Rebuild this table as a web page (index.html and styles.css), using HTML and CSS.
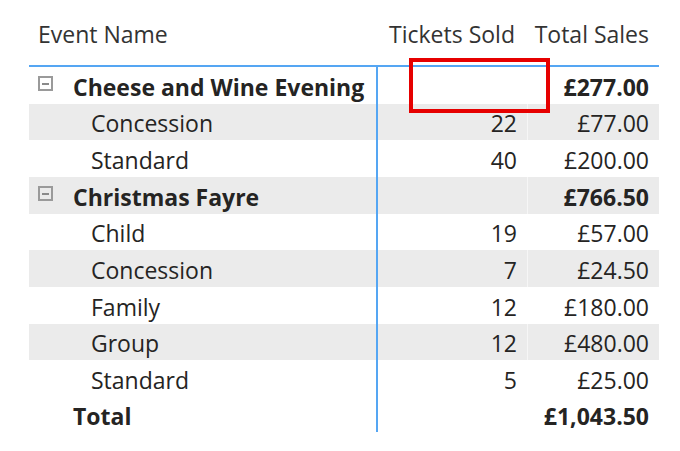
FILE: index.html
```html
<html>

<head>
  <meta name="description" content="Event ticket sales matrix" />
  <link rel="stylesheet" href="styles.css">
</head>

<body>
  <div class="matrix">
    <div class="row head">
      <div class="cell name">Event Name</div>
      <div class="cell num tickets">Tickets Sold</div>
      <div class="cell num">Total Sales</div>
    </div>

    <div class="row group">
      <div class="cell name"><span class="toggle"></span>Cheese and Wine Evening</div>
      <div class="cell num"></div>
      <div class="cell num sales">£277.00</div>
    </div>
    <div class="row child shade">
      <div class="cell name">Concession</div>
      <div class="cell num">22</div>
      <div class="cell num sales">£77.00</div>
    </div>
    <div class="row child">
      <div class="cell name">Standard</div>
      <div class="cell num">40</div>
      <div class="cell num sales">£200.00</div>
    </div>

    <div class="row group shade">
      <div class="cell name"><span class="toggle"></span>Christmas Fayre</div>
      <div class="cell num"></div>
      <div class="cell num sales">£766.50</div>
    </div>
    <div class="row child">
      <div class="cell name">Child</div>
      <div class="cell num">19</div>
      <div class="cell num sales">£57.00</div>
    </div>
    <div class="row child shade">
      <div class="cell name">Concession</div>
      <div class="cell num">7</div>
      <div class="cell num sales">£24.50</div>
    </div>
    <div class="row child">
      <div class="cell name">Family</div>
      <div class="cell num">12</div>
      <div class="cell num sales">£180.00</div>
    </div>
    <div class="row child shade">
      <div class="cell name">Group</div>
      <div class="cell num">12</div>
      <div class="cell num sales">£480.00</div>
    </div>
    <div class="row child">
      <div class="cell name">Standard</div>
      <div class="cell num">5</div>
      <div class="cell num sales">£25.00</div>
    </div>

    <div class="row total">
      <div class="cell name">Total</div>
      <div class="cell num"></div>
      <div class="cell num sales">£1,043.50</div>
    </div>

    <div class="highlight"></div>
  </div>
</body>

</html>
```

FILE: styles.css
```css
body {
  margin: 0;
  background: white;
  font-family: "Open Sans", "Noto Sans", sans-serif;
  color: #252423;
}

.matrix {
  position: relative;
  width: 630px;
  margin-left: 29px;
  font-size: 23px;
}

.row {
  display: grid;
  grid-template-columns: 349px 149px 132px;
  height: 36.67px;
}

.cell {
  display: flex;
  align-items: center;
  white-space: nowrap;
  padding-top: 3px;
  box-sizing: border-box;
}

.num {
  justify-content: flex-end;
  padding-right: 10px;
}

.row .name {
  border-right: 2px solid #55a6f3;
}

.head {
  height: 67px;
  border-bottom: 2px solid #55a6f3;
  box-sizing: border-box;
  color: #333333;
}

.head .name {
  border-right: none;
  padding-left: 9px;
  padding-top: 2px;
}

.head .num {
  padding-top: 2px;
}

.head .tickets {
  padding-right: 12px;
}

.shade {
  background-color: #ebebeb;
}

.shade .sales {
  border-left: 1px solid #f6f6f6;
}

.group,
.total {
  font-weight: 700;
}

.group .name {
  padding-left: 9px;
}

.toggle {
  flex-shrink: 0;
  width: 15px;
  height: 15px;
  border: 2px solid #9a9a9a;
  box-sizing: border-box;
  margin-right: 20px;
  margin-top: -6px;
  display: flex;
  align-items: center;
  justify-content: center;
}

.toggle::after {
  content: "";
  width: 7px;
  height: 2px;
  background: #8a8a8a;
}

.child .name {
  padding-left: 62px;
}

.total .name {
  padding-left: 44px;
}

.total {
  height: 35px;
}

.highlight {
  position: absolute;
  left: 380px;
  top: 58px;
  width: 141px;
  height: 55px;
  border: 4px solid #e60000;
  box-sizing: border-box;
}
```
